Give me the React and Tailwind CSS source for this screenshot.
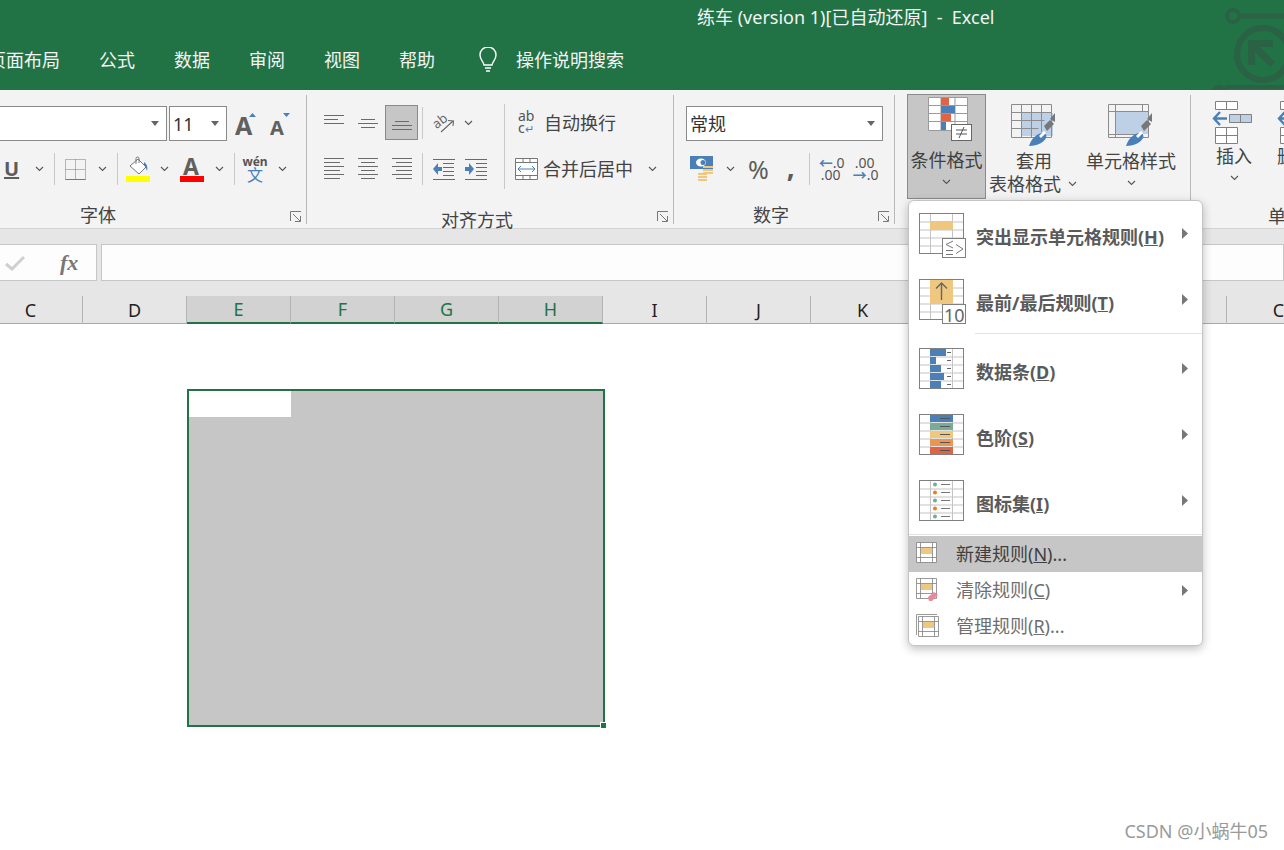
import React from 'react';

const GRAY = '#6a6a6a';
const BLUE = '#4a7fb8';
const ORANGE = '#efc77f';
const columns = ['C', 'D', 'E', 'F', 'G', 'H', 'I', 'J', 'K', 'L', 'M', 'N', 'C'];

function Chev() {
  return (
    <svg width="9" height="6" viewBox="0 0 9 6">
      <path d="M1 1l3.5 3.5L8 1" fill="none" stroke="#555" strokeWidth="1.1" />
    </svg>
  );
}

function Caret() {
  return (
    <svg width="8" height="5" viewBox="0 0 8 5">
      <path d="M0 0h8L4 5z" fill="#666" />
    </svg>
  );
}

function Launcher() {
  return (
    <svg className="absolute right-[4px] top-[121px]" width="12" height="12" viewBox="0 0 12 12">
      <path d="M.5 10V.5H11M3 3l7 7M5 10.5h5.5V5" fill="none" stroke="#777" strokeWidth="1" />
    </svg>
  );
}

function Sep() {
  return <div className="w-px h-[32px] bg-[#c8c8c8]" />;
}

function GroupSep() {
  return <div className="w-px h-[129px] mt-[5px] bg-[#b8b8b8] shrink-0" />;
}

// 3 to 6 text lines for the alignment buttons
function Lines({ ys, widths, align = 'left' }) {
  return (
    <svg width="20" height="22" viewBox="0 0 20 22">
      {ys.map((y, i) => {
        const w = widths[i % widths.length];
        const x = align === 'left' ? 0 : align === 'right' ? 20 - w : (20 - w) / 2;
        return <rect key={i} x={x} y={y} width={w} height="1" fill={GRAY} />;
      })}
    </svg>
  );
}

function Indent({ right }) {
  return (
    <svg width="23" height="22" viewBox="0 0 23 22">
      {[1, 5, 9, 13, 17, 21].map((y, i) => (
        <rect key={y} x={i === 0 || i === 5 ? (right ? 0 : 1) : right ? 11 : 11} y={y} width={i === 0 || i === 5 ? 22 : 11} height="1" fill={GRAY} />
      ))}
      {right ? (
        <path d="M0 9h4V5l5 6-5 6v-4H0z" fill={BLUE} />
      ) : (
        <path d="M10 9H6V5l-5 6 5 6v-4h4z" fill={BLUE} />
      )}
    </svg>
  );
}

function Brush({ dark }) {
  return (
    <g>
      <path d="M26 42c2-7 8-13 14-13 3 0 4 3 3 5-2 4-8 8-17 8z" fill={BLUE} transform="translate(-8 0)" />
      <path d="M33 22l6-6 4 4-7 7z" fill="#777" />
      <path d="M39 15l5-6v9z" fill="#777" />
      <path d="M28 32l5-5 2 2-5 5z" fill={dark ? '#fff' : '#fff'} />
    </g>
  );
}

function TableBrush() {
  return (
    <svg width="46" height="46" viewBox="0 0 46 46">
      <rect x="11" y="9" width="31" height="23" fill="#bdd0e5" />
      <path d="M.5.5h40v33H.5zM.5 8.5h40M.5 16.5h33M.5 24.5h27M10.5.5v33M20.5.5v33M30.5.5v28" fill="none" stroke="#8c8c8c" />
      <Brush />
    </svg>
  );
}

function StyleBrush() {
  return (
    <svg width="46" height="46" viewBox="0 0 46 46">
      <rect x="8" y="8" width="33" height="22" fill="#bdd0e5" />
      <path d="M.5.5h40v33H.5zM.5 7.5h40M.5 30.5h30M7.5.5v33M34.5.5v7" fill="none" stroke="#8c8c8c" />
      <Brush />
    </svg>
  );
}

function CondIcon() {
  return (
    <svg width="44" height="44" viewBox="0 0 44 44">
      <rect x=".5" y=".5" width="39" height="33" fill="#fff" />
      <path d="M.5.5h39v33H.5zM.5 8.5h39M.5 16.5h39M.5 24.5h39M13 .5v33M27 .5v33" fill="none" stroke="#9a9a9a" />
      <rect x="13" y="1" width="8" height="7" fill="#dd6444" />
      <rect x="13" y="9" width="14" height="7" fill={BLUE} />
      <rect x="13" y="17" width="10" height="7" fill="#dd6444" />
      <rect x="13" y="25" width="5" height="8" fill={BLUE} />
      <rect x="23.5" y="27.5" width="20" height="16" fill="#fff" stroke="#666" />
      <path d="M28 33h11M28 37h11M36 30l-5 11" fill="none" stroke="#555" />
    </svg>
  );
}

function InsertIcon() {
  return (
    <svg width="44" height="44" viewBox="0 0 44 44">
      <path d="M3.5 1.5h22v8h-22zM14.5 1.5v8M3.5 27.5h22v16h-22zM3.5 35.5h22M14.5 27.5v16" fill="#fff" stroke="#808080" />
      <path d="M17.5 14.5h22v8h-22zM28.5 14.5v8" fill="#bdd0e5" stroke="#808080" />
      <path d="M15 18.5H2M8 12l-6 6.5 6 6.5" fill="none" stroke={BLUE} strokeWidth="2.4" />
    </svg>
  );
}

// big table drawn behind the conditional format menu icons
function Grid({ children, h = 40 }) {
  const rows = [];
  for (let y = 8; y < h; y += 8) rows.push(y);
  return (
    <svg width="47" height="46" viewBox="0 0 47 46" className="shrink-0">
      <rect x=".5" y=".5" width="44" height={h} fill="#fff" stroke="#808080" />
      {rows.map((y) => (
        <rect key={y} x="1" y={y + 0.5} width="43" height="1" fill="#c4c4c4" />
      ))}
      <rect x="11" y="1" width="1" height={h - 1} fill="#c4c4c4" />
      <rect x="33" y="1" width="1" height={h - 1} fill="#c4c4c4" />
      {children}
    </svg>
  );
}

function SmallGrid() {
  return (
    <>
      <path d="M.5.5h20v20H.5zM.5 5.5h20M.5 15.5h20M4.5.5v20M16.5.5v20" fill="#fff" stroke="#808080" strokeWidth=".8" />
      <rect x="5" y="6" width="11" height="6" fill={ORANGE} />
    </>
  );
}

function Arrow() {
  return (
    <svg className="ml-auto mr-[14px] shrink-0" width="6" height="11" viewBox="0 0 6 11">
      <path d="M0 0l6 5.500-6 5.500z" fill="#777" />
    </svg>
  );
}

function BigItem({ icon, label, mnemonic, shift = 'mt-[15px]' }) {
  return (
    <div className="flex items-start h-[66px] pt-[12px] pl-[10px]">
      {icon}
      <div className="ml-[10px] mt-[12px] h-[24px] leading-[24px] font-bold text-[#5a5a5a] whitespace-nowrap">
        {label}(<span className="underline">{mnemonic}</span>)
      </div>
      <div className={`ml-auto ${shift}`}><Arrow /></div>
    </div>
  );
}

function SmallItem({ icon, label, mnemonic, tail, active, arrow }) {
  return (
    <div className={active ? 'flex items-center h-[36px] pl-[7px] bg-[#c6c6c6] text-[#3f3f3f]' : 'flex items-center h-[36px] pl-[7px] text-[#6e6e6e]'}>
      <svg width="24" height="24" viewBox="0 0 24 24" className="shrink-0">{icon}</svg>
      <div className="ml-[16px] whitespace-nowrap">
        {label}(<span className="underline">{mnemonic}</span>){tail}
      </div>
      {arrow && <div className="ml-auto"><Arrow /></div>}
    </div>
  );
}

function CondMenu() {
  return (
    <div className="absolute left-[908px] top-[200px] w-[295px] h-[446px] bg-white border border-[#c4c4c4] rounded-[6px] shadow-[0_3px_10px_rgba(0,0,0,0.25)] overflow-hidden">
      <BigItem
        label="突出显示单元格规则"
        mnemonic="H"
        icon={
          <Grid>
            <rect x="11" y="8" width="23" height="9" fill={ORANGE} />
            <rect x="23.500" y="25.500" width="23" height="19" fill="#fff" stroke="#808080" />
            <path d="M34 28l-7 3.500 7 3.500M27 37.500h7M27 41.500h7M37 31.500l7 4.500-7 4.500" fill="none" stroke="#777" />
          </Grid>
        }
      />
      <BigItem
        label="最前/最后规则"
        mnemonic="T"
        icon={
          <Grid>
            <rect x="11" y="1" width="23" height="24" fill={ORANGE} />
            <path d="M22.500 21V4M17 9.500l5.500-5.500 5.500 5.500" fill="none" stroke="#666" strokeWidth="1.400" />
            <rect x="23.500" y="25.500" width="23" height="19" fill="#fff" stroke="#808080" />
            <text x="25" y="43" fontSize="18" fill="#666" fontFamily="Noto Sans">10</text>
          </Grid>
        }
      />
      <div className="h-px ml-[66px] bg-[#e2e2e2]" />
      <div className="h-[2px]" />
      <BigItem
        label="数据条"
        mnemonic="D"
        icon={
          <Grid>
            {[16, 6, 11, 14, 11].map((w, i) => (
              <g key={i}>
                <rect x="11" y={1 + i * 8} width={w} height="7" fill={BLUE} />
                <rect x="28" y={4 + i * 8} width="4" height="1" fill="#666" />
              </g>
            ))}
          </Grid>
        }
      />
      <BigItem
        label="色阶"
        mnemonic="S"
        icon={
          <Grid>
            {[BLUE, '#7aab94', ORANGE, '#ea9650', '#dd6444'].map((c, i) => (
              <g key={c}>
                <rect x="11" y={1 + i * 8} width="23" height="7" fill={c} />
                <rect x="21" y={4 + i * 8} width="10" height="1" fill="#555" />
              </g>
            ))}
          </Grid>
        }
      />
      <BigItem
        label="图标集"
        mnemonic="I"
        icon={
          <Grid>
            {['#6fae96', '#ee7d22', '#6fae96', '#ee7d22', '#6fae96'].map((c, i) => (
              <g key={i}>
                <circle cx="16" cy={4.500 + i * 8} r="2" fill={c} />
                <rect x="22" y={4 + i * 8} width="9" height="1" fill="#777" />
              </g>
            ))}
          </Grid>
        }
      />
      <div className="h-[2px] border-t border-[#e2e2e2]" />
      <SmallItem active label="新建规则" mnemonic="N" tail="..." icon={<SmallGrid />} />
      <SmallItem
        arrow
        label="清除规则"
        mnemonic="C"
        icon={
          <>
            <SmallGrid />
            <path d="M12 19l6-5 4 3-6 6h-3z" fill="#e8899c" />
          </>
        }
      />
      <SmallItem
        label="管理规则"
        mnemonic="R"
        tail="..."
        icon={
          <>
            <path d="M.5 21V.5H21" fill="none" stroke="#808080" strokeWidth=".8" />
            <g transform="translate(2 2)"><SmallGrid /></g>
          </>
        }
      />
    </div>
  );
}

function Ribbon() {
  return (
    <div className="flex h-[139px] bg-[#f3f3f3] border-b border-[#d4d4d4] text-[#444]">
      {/* font */}
      <div className="relative w-[306px] shrink-0 pt-[16px]">
        <div className="flex items-center h-[35px]">
          <div className="flex items-center justify-end w-[169px] h-[35px] -ml-[2px] pr-[7px] bg-white border border-[#8a8a8a]"><Caret /></div>
          <div className="flex items-center justify-between w-[58px] h-[35px] ml-[2px] px-[3px] pr-[7px] bg-white border border-[#8a8a8a] text-[#333]">
            <span>11</span><Caret />
          </div>
          <svg className="ml-[8px]" width="22" height="26" viewBox="0 0 22 26">
            <text x="0" y="24" fontSize="25" fontWeight="700" fill="#606060" fontFamily="Noto Sans">A</text>
            <path d="M14 6l3.500-4 3.500 4z" fill={BLUE} />
          </svg>
          <svg className="ml-[13px]" width="22" height="26" viewBox="0 0 22 26">
            <text x="0" y="24" fontSize="20" fontWeight="700" fill="#606060" fontFamily="Noto Sans">A</text>
            <path d="M13 2h7l-3.500 4z" fill={BLUE} />
          </svg>
        </div>
        <div className="flex items-center h-[28px] mt-[14px]">
          <span className="w-[24px] pl-[4px] font-bold text-[20px] text-[#5c5c5c] underline">U</span>
          <div className="flex justify-center w-[30px]"><Chev /></div>
          <Sep />
          <div className="flex justify-center w-[40px]">
            <svg width="21" height="21" viewBox="0 0 21 21">
              <path d="M.5.500h20v20H.5zM10.500.5v20M.5 10.500h20" fill="none" stroke="#777" strokeDasharray="1 1" />
              <path d="M.5 20.500h20" stroke="#777" />
            </svg>
          </div>
          <div className="flex justify-center w-[14px]"><Chev /></div>
          <div className="w-[8px]" />
          <Sep />
          <div className="flex justify-center w-[40px]">
            <svg width="24" height="26" viewBox="0 0 24 26">
              <path d="M4 10l8-7 8 8-7 7z" fill="#fff" stroke="#777" />
              <path d="M10 8V2.500a1.500 1.500 0 013 0V7" fill="none" stroke="#777" />
              <path d="M18 6c3 2 4 5 3 9-1-3-2-5-3-6z" fill={BLUE} />
              <rect y="20" width="24" height="6" fill="#ffff00" />
            </svg>
          </div>
          <div className="flex justify-center w-[14px] -ml-[1px]"><Chev /></div>
          <div className="flex justify-center w-[40px] ml-[1px]">
            <svg width="24" height="26" viewBox="0 0 24 26">
              <text x="3" y="19" fontSize="23" fontWeight="700" fill="#606060" fontFamily="Noto Sans">A</text>
              <rect y="20" width="24" height="6" fill="#ff0000" />
            </svg>
          </div>
          <div className="flex justify-center w-[14px]"><Chev /></div>
          <div className="w-[8px]" />
          <Sep />
          <div className="flex flex-col items-center w-[40px] text-[12px] leading-[11px]">
            <span className="text-[#555] font-bold">wén</span>
            <span className="text-[16px] leading-[16px] text-[#4a7fb8]">文</span>
          </div>
          <div className="flex justify-center w-[14px]"><Chev /></div>
        </div>
        <div className="h-[22px] mt-[21px] leading-[22px] pl-[80px]">字体</div>
        <Launcher />
      </div>
      <GroupSep />

      {/* alignment */}
      <div className="relative w-[366px] shrink-0 pt-[14px]">
        <div className="flex h-[85px]">
          <div className="ml-[10px]">
            <div className="flex items-center h-[37px]">
              <div className="flex justify-center items-center w-[34px]"><Lines ys={[3, 7, 11]} widths={[20, 14, 20]} /></div>
              <div className="flex justify-center items-center w-[34px]"><Lines ys={[7, 11, 15]} widths={[14, 20, 14]} align="center" /></div>
              <div className="flex justify-center items-center w-[33px] h-[35px] bg-[#c6c6c6] border border-[#8a8a8a]"><Lines ys={[9, 13, 17]} widths={[14, 20, 20]} align="center" /></div>
              <div className="w-[4px]" />
              <Sep />
              <div className="flex justify-center w-[36px] pl-[6px]">
                <svg width="22" height="22" viewBox="0 0 22 22">
                  <text x="0" y="13" fontSize="13" fill="#666" fontFamily="Noto Sans" transform="rotate(-38 8 10)">ab</text>
                  <path d="M8 20L20 9M15 8.500l5.500.5-.5 5" fill="none" stroke="#666" strokeWidth="1.100" />
                </svg>
              </div>
              <div className="flex justify-center w-[14px] ml-[2px]"><Chev /></div>
            </div>
            <div className="flex items-center h-[32px] mt-[12px]">
              <div className="flex justify-center w-[34px]"><Lines ys={[0, 4, 8, 12, 16, 20]} widths={[20, 16]} /></div>
              <div className="flex justify-center w-[34px]"><Lines ys={[0, 4, 8, 12, 16, 20]} widths={[20, 14]} align="center" /></div>
              <div className="flex justify-center w-[33px]"><Lines ys={[0, 4, 8, 12, 16, 20]} widths={[20, 16]} align="right" /></div>
              <div className="w-[4px]" />
              <Sep />
              <div className="flex justify-center w-[32px] ml-[4px]"><Indent /></div>
              <div className="flex justify-center w-[34px]"><Indent right /></div>
            </div>
          </div>
          <div className="w-px h-[85px] ml-[11px] bg-[#c8c8c8]" />
          <div className="ml-[10px]">
            <div className="flex items-center h-[37px] gap-[6px] ml-[3px]">
              <div className="w-[20px] text-[14px] leading-[12px] text-[#555]">
                <div>ab</div>
                <div>c<span className="text-[11px] text-[#4a7fb8]">↵</span></div>
              </div>
              <span className="whitespace-nowrap">自动换行</span>
            </div>
            <div className="flex items-center h-[32px] mt-[12px]">
              <svg width="23" height="22" viewBox="0 0 23 22">
                <path d="M.5.500h22v21H.5zM.5 4.500h22M.5 17.500h22M8 .5v4M15 .5v4M8 17.500v4M15 17.500v4" fill="#fff" stroke="#777" />
                <path d="M3 11h17M6 8l-3 3 3 3M17 8l3 3-3 3" fill="none" stroke={BLUE} />
              </svg>
              <span className="ml-[5px] whitespace-nowrap">合并后居中</span>
              <div className="ml-[15px]"><Chev /></div>
            </div>
          </div>
        </div>
        <div className="h-[22px] mt-[20px] leading-[22px] pl-[134px]">对齐方式</div>
        <Launcher />
      </div>
      <GroupSep />

      {/* number */}
      <div className="relative w-[220px] shrink-0 pt-[16px]">
        <div className="flex items-center justify-between w-[197px] h-[35px] ml-[12px] pl-[3px] pr-[7px] bg-white border border-[#8a8a8a] text-[#333]">
          <span>常规</span><Caret />
        </div>
        <div className="flex items-center h-[28px] mt-[14px]">
          <svg className="ml-[16px]" width="24" height="26" viewBox="0 0 24 26">
            <rect width="23" height="13" fill={BLUE} />
            <ellipse cx="11" cy="6.500" rx="5" ry="4" fill="#fff" />
            <circle cx="13" cy="6.500" r="2.500" fill={BLUE} />
            <path d="M13 11h10M13 14h10M13 17h10M8 18h9M8 21h9M8 24h9" stroke={ORANGE} strokeWidth="2" />
          </svg>
          <div className="flex justify-center w-[32px]"><Chev /></div>
          <span className="text-[25px] text-[#5c5c5c] ml-[2px] leading-[28px]">%</span>
          <span className="text-[28px] font-bold text-[#5c5c5c] ml-[18px] leading-[28px] -mt-[6px]">,</span>
          <div className="w-[14px]" />
          <Sep />
          <div className="ml-[9px] w-[25px] text-[14px] leading-[12px] text-[#555] whitespace-nowrap">
            <div><span className="text-[#4a7fb8] font-bold">←</span>.0</div>
            <div className="pl-[2px]">.00</div>
          </div>
          <div className="ml-[9px] w-[25px] text-[14px] leading-[12px] text-[#555] whitespace-nowrap">
            <div className="pl-[2px]">.00</div>
            <div><span className="text-[#4a7fb8] font-bold">→</span>.0</div>
          </div>
        </div>
        <div className="h-[22px] mt-[21px] leading-[22px] pl-[79px]">数字</div>
        <Launcher />
      </div>
      <GroupSep />

      {/* styles */}
      <div className="flex w-[295px] shrink-0 pt-[4px]">
        <div className="flex flex-col items-center w-[79px] h-[105px] ml-[12px] pt-[2px] bg-[#c6c6c6] border border-[#8a8a8a]">
          <div className="pl-[6px]"><CondIcon /></div>
          <div className="h-[22px] mt-[8px] leading-[22px] whitespace-nowrap text-[#3f3f3f]">条件格式</div>
          <div className="mt-[8px]"><Chev /></div>
        </div>
        <div className="flex flex-col items-center w-[94px] ml-[1px] pt-[10px]">
          <TableBrush />
          <div className="h-[22px] mt-[0px] leading-[22px]">套用</div>
          <div className="flex items-center h-[24px] w-full pl-[2px] whitespace-nowrap leading-[24px]">
            表格格式<div className="ml-[7px]"><Chev /></div>
          </div>
        </div>
        <div className="flex flex-col items-center w-[100px] pt-[10px]">
          <StyleBrush />
          <div className="h-[22px] leading-[22px] whitespace-nowrap">单元格样式</div>
          <div className="mt-[8px]"><Chev /></div>
        </div>
      </div>
      <GroupSep />

      {/* cells */}
      <div className="flex flex-col pt-[10px] min-w-0">
        <div className="flex h-[105px]">
          <div className="flex flex-col items-center w-[86px] shrink-0">
            <InsertIcon />
            <div className="h-[22px] mt-[1px] leading-[22px] whitespace-nowrap">插入</div>
            <div className="mt-[8px]"><Chev /></div>
          </div>
          <div className="flex flex-col shrink-0 whitespace-nowrap">
            <InsertIcon />
            <div className="h-[22px] mt-[1px] leading-[22px]">删除</div>
          </div>
        </div>
        <div className="h-[22px] mt-[0px] leading-[22px] pl-[77px] whitespace-nowrap">单元格</div>
      </div>
    </div>
  );
}

export default function App() {
  return (
    <div className="relative w-[1284px] h-[850px] overflow-hidden bg-white text-[18px] leading-[24px] font-['Noto_Sans','Noto_Sans_CJK_SC',sans-serif]">
      {/* title + tabs */}
      <div className="relative h-[90px] bg-[#217346] text-white overflow-hidden">
        <div className="h-[36px] pl-[697px] leading-[35px] whitespace-pre text-[#f4f4f4]">练车 (version 1)[已自动还原]  -  Excel</div>
        <div className="flex items-center h-[54px] -ml-[12px] gap-[39px] pb-[6px] text-[#f4f4f4] whitespace-nowrap">
          <span>页面布局</span>
          <span>公式</span>
          <span>数据</span>
          <span>审阅</span>
          <span>视图</span>
          <span>帮助</span>
          <div className="flex items-center gap-[18px] ml-[4px]">
            <svg width="20" height="26" viewBox="0 0 20 26">
              <path d="M6 18c0-3-4-5-4-10a8 8 0 0116 0c0 5-4 7-4 10z" fill="none" stroke="#fff" strokeWidth="1.400" />
              <path d="M7 21h6M8 24h4" stroke="#fff" strokeWidth="1.400" />
            </svg>
            <span>操作说明搜索</span>
          </div>
        </div>
        <svg className="absolute right-0 top-0" width="84" height="90" viewBox="0 0 84 90">
          <circle cx="33" cy="16" r="6" fill="none" stroke="#2b6144" strokeWidth="4" />
          <path d="M39 16h45" stroke="#2b6144" strokeWidth="5" />
          <circle cx="63" cy="54" r="26" fill="none" stroke="#2b6144" strokeWidth="6" />
          <path d="M48 40h25v7H60l15 15-5 5-15-15v13h-7z" fill="#2b6144" />
          <circle cx="19" cy="93" r="6" fill="none" stroke="#2b6144" strokeWidth="4" />
          <path d="M25 87h59" stroke="#2b6144" strokeWidth="4" />
        </svg>
      </div>

      <Ribbon />

      {/* formula bar */}
      <div className="flex h-[67px] pt-[15px] bg-[#e6e6e6]">
        <div className="flex items-center w-[97px] h-[37px] bg-[#fdfdfd] border border-[#c6c6c6] border-l-0">
          <svg className="ml-[5px]" width="20" height="16" viewBox="0 0 20 16">
            <path d="M1 9l6 5L19 2" fill="none" stroke="#cfcfcf" strokeWidth="3" />
          </svg>
          <span className="ml-[35px] text-[22px] italic font-bold text-[#777] font-['Liberation_Serif',serif]">fx</span>
        </div>
        <div className="flex-1 h-[37px] ml-[4px] bg-[#fdfdfd] border border-[#c6c6c6]" />
      </div>

      {/* column headers */}
      <div className="flex h-[28px] -ml-[21px] bg-[#e6e6e6] border-b border-[#a8a8a8]">
        {columns.map((c, i) => (
          <div
            key={i}
            className={
              i >= 2 && i <= 5
                ? 'flex items-center justify-center w-[104px] h-[28px] shrink-0 bg-[#d2d2d2] border-r border-[#b4b4b4] border-b-2 border-b-[#217346] text-[#217346]'
                : 'flex items-center justify-center w-[104px] h-[28px] shrink-0 border-r border-[#b4b4b4] text-[#222]'
            }
          >
            {c}
          </div>
        ))}
      </div>

      {/* selected range */}
      <div className="pl-[187px] pt-[65px]">
        <div className="relative w-[418px] h-[338px] bg-[#c6c6c6] border-2 border-[#217346]">
          <div className="w-[102px] h-[26px] bg-white" />
          <div className="absolute -right-[4px] -bottom-[4px] w-[7px] h-[7px] bg-[#217346] border border-white" />
        </div>
      </div>

      <CondMenu />

      <div className="absolute right-[16px] top-[819px] text-[#9a9a9a] whitespace-nowrap">CSDN @小蜗牛05</div>
    </div>
  );
}
